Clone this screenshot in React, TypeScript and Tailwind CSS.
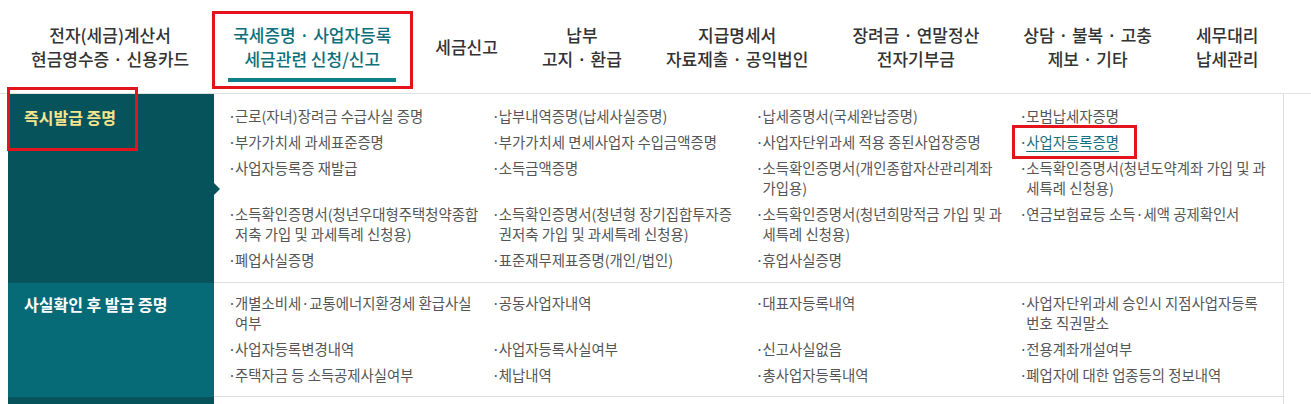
import React from 'react';

type Item = { lines: string[]; link?: boolean };

const navItems = [
  { lines: ['전자(세금)계산서', '현금영수증 · 신용카드'] },
  { lines: ['국세증명 · 사업자등록', '세금관련 신청/신고'], active: true },
  { lines: ['세금신고'] },
  { lines: ['납부', '고지 · 환급'] },
  { lines: ['지급명세서', '자료제출 · 공익법인'] },
  { lines: ['장려금 · 연말정산', '전자기부금'] },
  { lines: ['상담 · 불복 · 고충', '제보 · 기타'] },
  { lines: ['세무대리', '납세관리'] },
];

const instantItems: Item[] = [
  { lines: ['근로(자녀)장려금 수급사실 증명'] },
  { lines: ['납부내역증명(납세사실증명)'] },
  { lines: ['납세증명서(국세완납증명)'] },
  { lines: ['모범납세자증명'] },
  { lines: ['부가가치세 과세표준증명'] },
  { lines: ['부가가치세 면세사업자 수입금액증명'] },
  { lines: ['사업자단위과세 적용 종된사업장증명'] },
  { lines: ['사업자등록증명'], link: true },
  { lines: ['사업자등록증 재발급'] },
  { lines: ['소득금액증명'] },
  { lines: ['소득확인증명서(개인종합자산관리계좌', '가입용)'] },
  { lines: ['소득확인증명서(청년도약계좌 가입 및 과', '세특례 신청용)'] },
  { lines: ['소득확인증명서(청년우대형주택청약종합', '저축 가입 및 과세특례 신청용)'] },
  { lines: ['소득확인증명서(청년형 장기집합투자증', '권저축 가입 및 과세특례 신청용)'] },
  { lines: ['소득확인증명서(청년희망적금 가입 및 과', '세특례 신청용)'] },
  { lines: ['연금보험료등 소득·세액 공제확인서'] },
  { lines: ['폐업사실증명'] },
  { lines: ['표준재무제표증명(개인/법인)'] },
  { lines: ['휴업사실증명'] },
];

const checkedItems: Item[] = [
  { lines: ['개별소비세·교통에너지환경세 환급사실', '여부'] },
  { lines: ['공동사업자내역'] },
  { lines: ['대표자등록내역'] },
  { lines: ['사업자단위과세 승인시 지점사업자등록', '번호 직권말소'] },
  { lines: ['사업자등록변경내역'] },
  { lines: ['사업자등록사실여부'] },
  { lines: ['신고사실없음'] },
  { lines: ['전용계좌개설여부'] },
  { lines: ['주택자금 등 소득공제사실여부'] },
  { lines: ['체납내역'] },
  { lines: ['총사업자등록내역'] },
  { lines: ['폐업자에 대한 업종등의 정보내역'] },
];

// red annotation outline laid over a highlighted element
function Mark({ className }: { className: string }) {
  return <span className={'pointer-events-none absolute border-[3px] border-[#e3141b] ' + className} />;
}

function Entry({ item }: { item: Item }) {
  return (
    <li className="relative pl-[7px] whitespace-nowrap">
      <span className="absolute left-0 top-0">·</span>
      {item.link ? (
        <>
          <a href="#" className="text-[#17707d] underline underline-offset-[3px]">
            {item.lines[0]}
          </a>
          <Mark className="-left-[7px] -top-[7px] h-[34px] w-[125px]" />
        </>
      ) : (
        item.lines.map((l, i) => (
          <React.Fragment key={i}>
            {i > 0 && <br />}
            {l}
          </React.Fragment>
        ))
      )}
    </li>
  );
}

function Section({
  title,
  items,
  dark,
}: {
  title: string;
  items: Item[];
  dark?: boolean;
}) {
  return (
    <div className="flex">
      <div
        className={
          dark
            ? 'relative w-[206px] shrink-0 bg-[#07535c] pl-[16px] pt-[12px]'
            : 'relative w-[206px] shrink-0 bg-[#066b77] pl-[16px] pt-[10px]'
        }
      >
        <h3
          className={
            dark
              ? 'text-[16px] font-bold leading-[22px] text-[#f6e58c]'
              : 'text-[16px] font-bold leading-[22px] text-white'
          }
        >
          {title}
        </h3>
        {dark && (
          <>
            <span className="absolute top-1/2 -right-[6px] -mt-[6px] h-0 w-0 border-y-[6px] border-l-[6px] border-y-transparent border-l-[#07535c]" />
            <Mark className="-left-[1px] -top-[7px] h-[64px] w-[131px]" />
          </>
        )}
      </div>
      <ul
        className={
          dark
            ? 'grid flex-1 grid-cols-4 gap-y-[6px] border-b border-[#dddddd] pl-[14px] pt-[12px] pb-[12px] text-[14.4px] leading-[20px] text-[#555]'
            : 'grid flex-1 grid-cols-4 gap-y-[6px] border-b border-[#dddddd] pl-[14px] pt-[10px] pb-[11px] text-[14.4px] leading-[20px] text-[#555]'
        }
      >
        {items.map((it, i) => (
          <Entry key={i} item={it} />
        ))}
      </ul>
    </div>
  );
}

export default function App() {
  return (
    <div
      className="h-[404px] w-[1311px] overflow-hidden bg-white"
      style={{ fontFamily: '"Noto Sans CJK KR", "Noto Sans", sans-serif' }}
    >
      <nav className="flex h-[94px] items-stretch border-b border-[#e2e2e2] px-[9px]">
        {navItems.map((n, i) => (
          <div
            key={i}
            className={
              n.active
                ? 'relative flex items-center px-[22px] text-center text-[17px] font-medium leading-[24px] text-[#0d6f7a]'
                : 'relative flex items-center px-[22px] text-center text-[17px] font-medium leading-[24px] text-[#333]'
            }
          >
            <div>
              {n.lines.map((l, j) => (
                <div key={j}>{l}</div>
              ))}
            </div>
            {n.active && (
              <>
                <span className="absolute bottom-[11px] left-[17px] right-[17px] h-[4px] bg-[#0f7f8a]" />
                <Mark className="left-[1px] right-0 top-[11px] bottom-[4px]" />
              </>
            )}
          </div>
        ))}
      </nav>

      <div className="ml-[8px] w-[1276px] border-r border-[#dddddd]">
        <Section title="즉시발급 증명" items={instantItems} dark />
        <Section title="사실확인 후 발급 증명" items={checkedItems} />
        <div className="h-[20px] w-[206px] bg-[#07535c]" />
      </div>
    </div>
  );
}
